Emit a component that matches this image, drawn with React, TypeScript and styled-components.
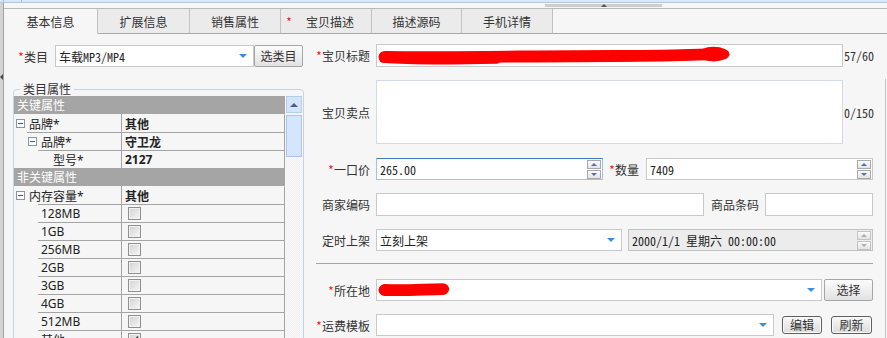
import React from "react";
import styled, { createGlobalStyle } from "styled-components";

const UI = `"Noto Sans", "Noto Sans CJK SC", sans-serif`;
const CJK = `"Noto Sans CJK SC", "Noto Sans", sans-serif`;
const MONO = `"Noto Sans Mono CJK SC", "DejaVu Sans Mono", "Noto Sans CJK SC", monospace`;

const GlobalStyle = createGlobalStyle`
  * { box-sizing: border-box; }
  html, body { margin: 0; padding: 0; }
  body { background: #f6f6f6; font-family: ${CJK}; font-size: 12px; color: #333; }
`;

const Page = styled.div`
  width: 887px;
  height: 338px;
  overflow: hidden;
  display: flex;
  flex-direction: column;
  background: #f6f6f6;
`;

const TopStrip = styled.div`
  height: 3px;
  flex: none;
  display: flex;
  background: #d8e7f9;
  border-bottom: 1px solid #b3c6de;
`;

const StripCell = styled.div<{ $w: number }>`
  width: ${(p) => p.$w}px;
  height: 100%;
  border-right: 1px solid #a9bfdc;
`;

const Body = styled.div`
  flex: 1;
  display: flex;
  min-height: 0;
`;

const Gutter = styled.div`
  width: 3px;
  flex: none;
  background: #d3d3d3;
  display: flex;
  flex-direction: column;
`;

const GutterArrow = styled.div`
  margin-top: 71px;
  width: 0;
  height: 0;
  border-top: 3px solid transparent;
  border-bottom: 3px solid transparent;
  border-right: 3px solid #4a4a4a;
`;

const Main = styled.div`
  flex: 1;
  display: flex;
  flex-direction: column;
  border-left: 1px solid #a3a3a3;
  min-width: 0;
`;

const HandleRow = styled.div`
  height: 6px;
  flex: none;
  border-bottom: 1px solid #b9b9b9;
  padding: 1px 0 0 541px;
  display: flex;
  align-items: flex-start;
`;

const Handle = styled.div`
  width: 117px;
  height: 3px;
  background: #cdcdcd;
  display: flex;
  justify-content: center;
  align-items: flex-end;
`;

const HandleArrow = styled.div`
  width: 0;
  height: 0;
  border-left: 3px solid transparent;
  border-right: 3px solid transparent;
  border-bottom: 3px solid #555;
`;

const TabBar = styled.div`
  height: 25px;
  flex: none;
  display: flex;
`;

const Tab = styled.div<{ $w: number; $active?: boolean }>`
  width: ${(p) => p.$w}px;
  flex: none;
  height: 100%;
  display: flex;
  align-items: center;
  border-right: 1px solid #c2c2c2;
  border-bottom: 1px solid ${(p) => (p.$active ? "transparent" : "#a9a9a9")};
  background: ${(p) => (p.$active ? "#f6f6f6" : "#ebebeb")};
  font-size: 12px;
  color: #333;
`;

const TabStar = styled.span`
  color: #f00;
  font-family: ${MONO};
  margin-left: 5px;
  width: 6px;
  flex: none;
`;

const TabText = styled.span<{ $pr?: number }>`
  flex: 1;
  text-align: center;
  padding-right: ${(p) => p.$pr ?? 0}px;
  white-space: nowrap;
`;

const TabFiller = styled.div`
  flex: 1;
  border-bottom: 1px solid #a9a9a9;
`;

const Content = styled.div`
  flex: 1;
  display: flex;
  min-height: 0;
`;

const LeftPanel = styled.div`
  width: 300px;
  flex: none;
  display: flex;
  flex-direction: column;
`;

const CatRow = styled.div`
  margin-top: 11px;
  height: 22px;
  flex: none;
  display: flex;
  align-items: center;
  padding-left: 14px;
`;

const CatLabel = styled.div`
  width: 37px;
  flex: none;
  white-space: nowrap;
`;

const Star = styled.span`
  color: #f00;
  font-family: ${MONO};
  font-size: 12px;
`;

const Fieldset = styled.fieldset`
  margin: 15px 0 0 9px;
  padding: 0;
  width: 291px;
  min-width: 0;
  border: 1px solid #c5d3e3;
  border-radius: 4px;
  flex: none;
`;

const Legend = styled.legend`
  margin-left: 6px;
  padding: 0 3px;
  font-size: 12px;
  line-height: 14px;
  color: #333;
`;

const TableWrap = styled.div`
  display: flex;
`;

const Table = styled.div`
  width: 271px;
  flex: none;
  display: flex;
  flex-direction: column;
  font-family: ${UI};
  font-size: 12px;
  color: #222;
`;

const HeaderRow = styled.div`
  height: 18px;
  background: #a5a5a5;
  color: #fff;
  padding-left: 3px;
  display: flex;
  align-items: center;
  white-space: nowrap;
`;

const Row = styled.div`
  height: 18px;
  display: flex;
`;

const NameCell = styled.div`
  width: 108px;
  flex: none;
  display: flex;
  border-right: 1px solid #a4a4a4;
`;

const NameLine = styled.div<{ $indent: number; $pad: number; $line: boolean }>`
  margin-left: ${(p) => p.$indent}px;
  flex: 1;
  display: flex;
  align-items: center;
  gap: 4px;
  padding-left: ${(p) => p.$pad - p.$indent}px;
  border-top: 1px solid ${(p) => (p.$line ? "#a4a4a4" : "transparent")};
  white-space: nowrap;
`;

const ValueCell = styled.div<{ $line: boolean; $bold?: boolean }>`
  flex: 1;
  display: flex;
  align-items: center;
  padding-left: 3px;
  border-right: 1px solid #a4a4a4;
  border-top: 1px solid ${(p) => (p.$line ? "#a4a4a4" : "transparent")};
  font-weight: ${(p) => (p.$bold ? 700 : 400)};
`;

const Toggle = styled.span`
  width: 9px;
  height: 9px;
  flex: none;
  border: 1px solid #8396b1;
  background: #fff;
  display: flex;
  align-items: center;
  justify-content: center;
  &::after {
    content: "";
    width: 5px;
    height: 1px;
    background: #4f5d73;
  }
`;

const Check = styled.span`
  width: 13px;
  height: 13px;
  margin-left: 3px;
  flex: none;
  border: 1px solid #8f8f8f;
  background: linear-gradient(135deg, #d2d2d2, #f6f6f6);
  box-shadow: inset 0 0 0 1px #f2f2f2;
  display: flex;
  align-items: center;
  justify-content: center;
`;

const ScrollCol = styled.div`
  width: 16px;
  margin-left: 1px;
  flex: none;
  display: flex;
  flex-direction: column;
  background: repeating-conic-gradient(#efefef 0 25%, #fbfbfb 0 50%) 0 0 / 2px 2px;
`;

const ScrollBtn = styled.div`
  height: 17px;
  border: 1px solid #b5cde9;
  background: #d4e4f9;
  display: flex;
  align-items: center;
  justify-content: center;
  &::after {
    content: "";
    width: 0;
    height: 0;
    border-left: 4px solid transparent;
    border-right: 4px solid transparent;
    border-bottom: 4px solid #4d5f7c;
  }
`;

const ScrollThumb = styled.div`
  margin-top: 2px;
  height: 42px;
  border: 1px solid #abc6ea;
  background: #d5e5fb;
`;

const RightPanel = styled.div`
  flex: 1;
  display: flex;
  min-width: 0;
`;

const Form = styled.div`
  flex: 1;
  display: flex;
  flex-direction: column;
`;

const EdgeLine = styled.div`
  width: 1px;
  flex: none;
  margin: 45px 1px 0 0;
  background: #c4c4c4;
`;

const FormRow = styled.div<{ $mt: number; $h: number }>`
  margin-top: ${(p) => p.$mt}px;
  height: ${(p) => p.$h}px;
  flex: none;
  display: flex;
  align-items: center;
`;

const Label = styled.div`
  width: 66px;
  margin-right: 6px;
  flex: none;
  text-align: right;
  white-space: nowrap;
  font-size: 12px;
  color: #333;
`;

const InlineLabel = styled.div<{ $ml: number; $mr: number }>`
  margin: 0 ${(p) => p.$mr}px 0 ${(p) => p.$ml}px;
  flex: none;
  white-space: nowrap;
  font-size: 12px;
  color: #333;
`;

type Tone = "plain" | "soft" | "focus" | "disabled";

const Field = styled.div<{ $w: number; $tone?: Tone; $ml?: number }>`
  position: relative;
  width: ${(p) => p.$w}px;
  margin-left: ${(p) => p.$ml ?? 0}px;
  height: 100%;
  flex: none;
  display: flex;
  align-items: center;
  padding-left: 3px;
  background: ${(p) => (p.$tone === "disabled" ? "#ececec" : "#fff")};
  border: 1px solid
    ${(p) =>
      p.$tone === "soft"
        ? "#d2dae6"
        : p.$tone === "focus"
        ? "#9fc3e6"
        : p.$tone === "disabled"
        ? "#c2c2c2"
        : "#c9c9c9"};
  border-top-color: ${(p) => (p.$tone === "focus" ? "#3f7cb8" : undefined)};
  font-family: ${MONO};
  font-size: 12px;
  color: #222;
  white-space: nowrap;
`;

const SelectArrow = styled.span`
  margin-left: auto;
  margin-right: 6px;
  width: 0;
  height: 0;
  border-left: 4px solid transparent;
  border-right: 4px solid transparent;
  border-top: 4px solid #3a8ee0;
`;

const Spinner = styled.div`
  margin-left: auto;
  margin-right: 1px;
  display: flex;
  flex-direction: column;
  gap: 1px;
`;

const SpinBtn = styled.div<{ $down?: boolean; $disabled?: boolean }>`
  width: 14px;
  height: 9px;
  border: 1px solid ${(p) => (p.$disabled ? "#c4c4c4" : "#a9a9a9")};
  background: linear-gradient(#fbfbfb, #e3e3e3);
  display: flex;
  align-items: center;
  justify-content: center;
  &::after {
    content: "";
    width: 0;
    height: 0;
    border-left: 3px solid transparent;
    border-right: 3px solid transparent;
    ${(p) => (p.$down ? "border-top" : "border-bottom")}: 3px solid
      ${(p) => (p.$disabled ? "#b0b0b0" : "#5a6ea6")};
  }
`;

const Counter = styled.span`
  margin-left: 1px;
  font-family: ${MONO};
  font-size: 12px;
  color: #333;
`;

const Separator = styled.div`
  height: 1px;
  flex: none;
  margin: 12px 12px 0 12px;
  background: #a5a5a5;
`;

const GrayButton = styled.button<{ $w: number; $ml?: number }>`
  width: ${(p) => p.$w}px;
  height: 22px;
  margin-left: ${(p) => p.$ml ?? 0}px;
  flex: none;
  padding: 0;
  border: 1px solid #a6a6a6;
  border-radius: 2px;
  background: linear-gradient(#fcfcfc, #e2e2e2);
  font-family: ${CJK};
  font-size: 12px;
  line-height: 1;
  color: #333;
  display: flex;
  align-items: center;
  justify-content: center;
`;

const DarkButton = styled.button<{ $w: number; $ml: number }>`
  width: ${(p) => p.$w}px;
  height: 18px;
  margin-left: ${(p) => p.$ml}px;
  flex: none;
  padding: 0;
  border: 1px solid #5f5f5f;
  border-radius: 3px;
  box-shadow: inset 0 0 0 1px #fafafa;
  background: linear-gradient(#f8f8f8, #dcdcdc);
  font-family: ${CJK};
  font-size: 12px;
  line-height: 1;
  color: #333;
  display: flex;
  align-items: center;
  justify-content: center;
`;

const Scribble = styled.svg`
  position: absolute;
  left: 0;
  top: 0;
  width: 100%;
  height: 100%;
  pointer-events: none;
`;

const LEVELS = {
  0: { indent: 0, pad: 2, line: false },
  1: { indent: 13, pad: 14, line: true },
  2: { indent: 24, pad: 39, line: true },
  3: { indent: 24, pad: 27, line: true },
} as const;

type RowData =
  | { kind: "header"; text: string }
  | { kind: "attr"; level: 0 | 1 | 2; name: string; value: string; toggle: boolean }
  | { kind: "option"; name: string; checked?: boolean };

const rows: RowData[] = [
  { kind: "header", text: "关键属性" },
  { kind: "attr", level: 0, name: "品牌*", value: "其他", toggle: true },
  { kind: "attr", level: 1, name: "品牌*", value: "守卫龙", toggle: true },
  { kind: "attr", level: 2, name: "型号*", value: "2127", toggle: false },
  { kind: "header", text: "非关键属性" },
  { kind: "attr", level: 0, name: "内存容量*", value: "其他", toggle: true },
  { kind: "option", name: "128MB" },
  { kind: "option", name: "1GB" },
  { kind: "option", name: "256MB" },
  { kind: "option", name: "2GB" },
  { kind: "option", name: "3GB" },
  { kind: "option", name: "4GB" },
  { kind: "option", name: "512MB" },
  { kind: "option", name: "其他", checked: true },
];

const tabs = [
  { w: 94, text: "基本信息", active: true },
  { w: 92, text: "扩展信息" },
  { w: 91, text: "销售属性" },
  { w: 91, text: "宝贝描述", star: true },
  { w: 90, text: "描述源码" },
  { w: 91, text: "手机详情" },
];

function AttrRow({ r }: { r: RowData }) {
  if (r.kind === "header") return <HeaderRow>{r.text}</HeaderRow>;
  if (r.kind === "attr") {
    const L = LEVELS[r.level];
    return (
      <Row>
        <NameCell>
          <NameLine $indent={L.indent} $pad={L.pad} $line={L.line}>
            {r.toggle && <Toggle />}
            <span>{r.name}</span>
          </NameLine>
        </NameCell>
        <ValueCell $line={L.line} $bold>
          {r.value}
        </ValueCell>
      </Row>
    );
  }
  const L = LEVELS[3];
  return (
    <Row>
      <NameCell>
        <NameLine $indent={L.indent} $pad={L.pad} $line={L.line}>
          <span>{r.name}</span>
        </NameLine>
      </NameCell>
      <ValueCell $line>
        <Check>
          {r.checked && (
            <svg width="9" height="9" viewBox="0 0 9 9">
              <path d="M1 4.5 L3.5 7 L8 1.5" fill="none" stroke="#333" strokeWidth="1.6" />
            </svg>
          )}
        </Check>
      </ValueCell>
    </Row>
  );
}

function Spin({ disabled }: { disabled?: boolean }) {
  return (
    <Spinner>
      <SpinBtn $disabled={disabled} />
      <SpinBtn $down $disabled={disabled} />
    </Spinner>
  );
}

export default function App() {
  return (
    <Page>
      <GlobalStyle />
      <TopStrip>
        <StripCell $w={4} />
        <StripCell $w={18} />
      </TopStrip>
      <Body>
        <Gutter>
          <GutterArrow />
        </Gutter>
        <Main>
          <HandleRow>
            <Handle>
              <HandleArrow />
            </Handle>
          </HandleRow>
          <TabBar>
            {tabs.map((t) => (
              <Tab key={t.text} $w={t.w} $active={t.active}>
                {t.star && <TabStar>*</TabStar>}
                <TabText $pr={t.star ? 3 : 0}>{t.text}</TabText>
              </Tab>
            ))}
            <TabFiller />
          </TabBar>
          <Content>
            <LeftPanel>
              <CatRow>
                <CatLabel>
                  <Star>*</Star>类目
                </CatLabel>
                <Field $w={199}>
                  车载MP3/MP4
                  <SelectArrow />
                </Field>
                <GrayButton $w={49}>选类目</GrayButton>
              </CatRow>
              <Fieldset>
                <Legend>类目属性</Legend>
                <TableWrap>
                  <Table>
                    {rows.map((r, i) => (
                      <AttrRow key={i} r={r} />
                    ))}
                  </Table>
                  <ScrollCol>
                    <ScrollBtn />
                    <ScrollThumb />
                  </ScrollCol>
                </TableWrap>
              </Fieldset>
            </LeftPanel>
            <RightPanel>
              <Form>
                <FormRow $mt={10} $h={23}>
                  <Label>
                    <Star>*</Star>宝贝标题
                  </Label>
                  <Field $w={467}>
                    <Scribble viewBox="0 0 467 23" preserveAspectRatio="none">
                      <path
                        d="M8 13 C 80 14, 160 12, 240 12 S 320 10, 344 10"
                        fill="none"
                        stroke="#ff0000"
                        strokeWidth="13"
                        strokeLinecap="round"
                      />
                      <ellipse cx="338" cy="10" rx="16" ry="8" fill="#ff0000" />
                      <path d="M6 16 C 40 19, 80 18, 120 17" fill="none" stroke="#ff0000" strokeWidth="7" strokeLinecap="round" />
                    </Scribble>
                  </Field>
                  <Counter>57/60</Counter>
                </FormRow>
                <FormRow $mt={13} $h={64}>
                  <Label>宝贝卖点</Label>
                  <Field $w={467} $tone="soft" />
                  <Counter>0/150</Counter>
                </FormRow>
                <FormRow $mt={14} $h={22}>
                  <Label>
                    <Star>*</Star>一口价
                  </Label>
                  <Field $w={227} $tone="focus">
                    265.00
                    <Spin />
                  </Field>
                  <InlineLabel $ml={6} $mr={7}>
                    <Star>*</Star>数量
                  </InlineLabel>
                  <Field $w={227} $tone="plain">
                    7409
                    <Spin />
                  </Field>
                </FormRow>
                <FormRow $mt={13} $h={23}>
                  <Label>商家编码</Label>
                  <Field $w={328} />
                  <InlineLabel $ml={7} $mr={6}>
                    商品条码
                  </InlineLabel>
                  <Field $w={108} />
                </FormRow>
                <FormRow $mt={13} $h={22}>
                  <Label>定时上架</Label>
                  <Field $w={246}>
                    立刻上架
                    <SelectArrow />
                  </Field>
                  <Field $w={245} $ml={6} $tone="disabled">
                    2000/1/1 星期六 00:00:00
                    <Spin disabled />
                  </Field>
                </FormRow>
                <Separator />
                <FormRow $mt={15} $h={22}>
                  <Label>
                    <Star>*</Star>所在地
                  </Label>
                  <Field $w={446}>
                    <Scribble viewBox="0 0 446 22" preserveAspectRatio="none">
                      <path
                        d="M8 11 C 30 12, 50 10, 66 10"
                        fill="none"
                        stroke="#ff0000"
                        strokeWidth="13"
                        strokeLinecap="round"
                      />
                    </Scribble>
                    <SelectArrow />
                  </Field>
                  <GrayButton $w={49} $ml={2}>
                    选择
                  </GrayButton>
                </FormRow>
                <FormRow $mt={13} $h={22}>
                  <Label>
                    <Star>*</Star>运费模板
                  </Label>
                  <Field $w={398}>
                    <SelectArrow />
                  </Field>
                  <DarkButton $w={40} $ml={8}>
                    编辑
                  </DarkButton>
                  <DarkButton $w={41} $ml={9}>
                    刷新
                  </DarkButton>
                </FormRow>
              </Form>
              <EdgeLine />
            </RightPanel>
          </Content>
        </Main>
      </Body>
    </Page>
  );
}
